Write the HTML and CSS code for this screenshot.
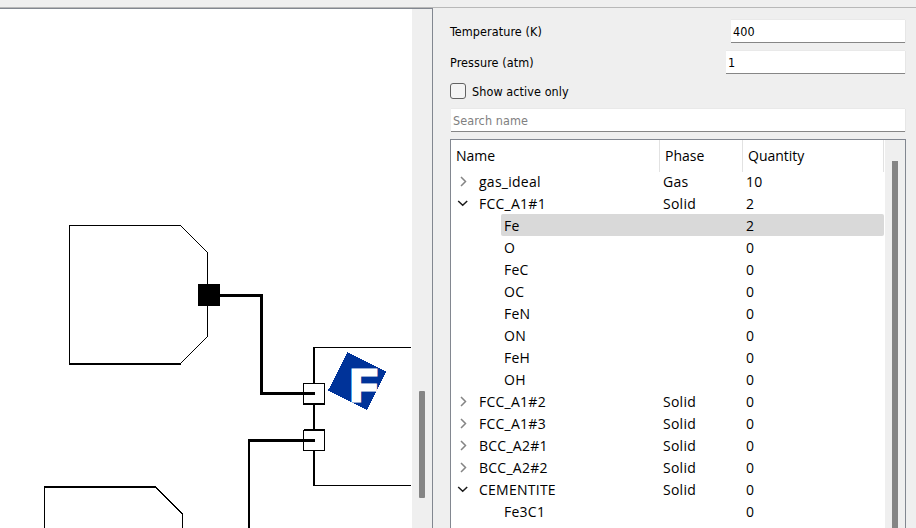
FILE: index.html
```html
<!DOCTYPE html>
<html lang="en">
<head>
<meta charset="utf-8">
<title>Stream editor</title>
<link rel="stylesheet" href="styles.css">
</head>
<body>
<main class="workspace">
  <section class="view">
    <svg class="scene" width="411" height="519" viewBox="0 9 411 519" shape-rendering="crispEdges">
      <g class="line">
        <path d="M69.5 364V225.5H180.5M207.500 252V336"/>
        <path class="slope" d="M180.5 225.500L207.5 252.5M207.500 336.5L180.5 363.5M155.500 487.500L182.500 513.500"/>
        <path class="w2" d="M69 364H181"/>
        <path d="M44.5 528V487M182.5 513V528"/>
        <path class="w2" d="M44 487H156"/>
        <path d="M313 347.5H411M313 485.5H411"/>
        <path class="w2" d="M314 347V486"/>
      </g>
      <rect x="198" y="284" width="22" height="22"/>
      <g class="port">
        <rect x="303.5" y="383.5" width="21" height="20"/>
        <rect x="303.5" y="430.5" width="21" height="20"/>
      </g>
      <path class="line w1" d="M303 404.5H325M304 429.5H325"/>
      <path class="line w3" d="M220 295.5H261.500V393.500H315M249 440.500H315"/>
      <path class="line w2" d="M249 439V528"/>
      <path class="logo" d="M347.500 352L386 371.500L367 410L328 390.500Z"/>
      <text class="mark" x="350" y="400.500">F</text>
    </svg>
    <div class="track"><div class="thumb"></div></div>
  </section>
  <aside class="panel">
    <div class="field temp"><label>Temperature (K)</label><div class="edit">400</div></div>
    <div class="field pres"><label>Pressure (atm)</label><div class="edit">1</div></div>
    <div class="check"><span class="box"></span><span>Show active only</span></div>
    <div class="edit search">Search name</div>
    <div class="tree">
      <div class="content">
        <div class="head"><span class="h1">Name</span><span class="h2">Phase</span><span class="h3">Quantity</span></div>
        <div class="row shut"><i></i><b>gas_ideal</b><b>Gas</b><b>10</b></div>
        <div class="row open"><i></i><b>FCC_A1#1</b><b>Solid</b><b>2</b></div>
        <div class="row child selected"><b>Fe</b><b></b><b>2</b></div>
        <div class="row child"><b>O</b><b></b><b>0</b></div>
        <div class="row child"><b>FeC</b><b></b><b>0</b></div>
        <div class="row child"><b>OC</b><b></b><b>0</b></div>
        <div class="row child"><b>FeN</b><b></b><b>0</b></div>
        <div class="row child"><b>ON</b><b></b><b>0</b></div>
        <div class="row child"><b>FeH</b><b></b><b>0</b></div>
        <div class="row child"><b>OH</b><b></b><b>0</b></div>
        <div class="row shut"><i></i><b>FCC_A1#2</b><b>Solid</b><b>0</b></div>
        <div class="row shut"><i></i><b>FCC_A1#3</b><b>Solid</b><b>0</b></div>
        <div class="row shut"><i></i><b>BCC_A2#1</b><b>Solid</b><b>0</b></div>
        <div class="row shut"><i></i><b>BCC_A2#2</b><b>Solid</b><b>0</b></div>
        <div class="row open"><i></i><b>CEMENTITE</b><b>Solid</b><b>0</b></div>
        <div class="row child"><b>Fe3C1</b><b></b><b>0</b></div>
      </div>
      <div class="tree-track"><div class="tree-thumb"></div></div>
    </div>
  </aside>
</main>
<script src="script.js"></script>
</body>
</html>
```
FILE: script.js
```js
// Adds the chevron that shows whether a tree row is expanded.
document.querySelectorAll('.row > i').forEach(function (el) {
  var open = el.parentNode.classList.contains('open');
  el.innerHTML = '<svg width="12" height="12" viewBox="0 0 12 12"><path d="' +
    (open ? 'M1.200 4L5.700 8.300L10.200 4' : 'M4 2L8.500 6.500L4 11') + '"/></svg>';
});
```
FILE: styles.css
```css
* { box-sizing: border-box; }
body { margin: 0; height: 528px; overflow: hidden; background: #efefef; color: #000; }
.workspace { display: flex; height: 528px; padding-top: 7px; background: linear-gradient(#b8b8b8, #b8b8b8) 0 7px / 100% 1px no-repeat; }
.view { width: 433px; flex: none; margin-top: 1px; border-top: 1px solid #828790; border-right: 1px solid #828790; display: flex; background: #fff; }
.scene { display: block; flex: none; margin-right: 1px; }
.line { fill: none; stroke: #000; stroke-width: 1; }
.slope { stroke-width: 1.4; }
.w2 { stroke-width: 2; }
.w3 { stroke-width: 3; }
.port rect { fill: #fff; stroke: #000; }
.logo { fill: #003399; }
.mark { font: bold 45px "Liberation Sans", sans-serif; fill: #fff; stroke: #fff; stroke-width: 3px; }
.track { width: 20px; background: #efefef; padding: 382px 0 0 7px; }
.thumb { width: 6px; height: 107px; background: #858585; border-radius: 1px; }

.panel { flex: none; width: 473px; margin-top: 13px; padding-left: 17px; display: flex; flex-direction: column; font: 12.5px/24px "DejaVu Sans Condensed", "DejaVu Sans", sans-serif; font-stretch: condensed; letter-spacing: 0.08px; }
.field { display: flex; justify-content: space-between; height: 23px; margin-bottom: 8px; padding-right: 1px; }
.edit { height: 23px; line-height: 24px; padding-left: 2px; background: #fff; border-bottom: 1px solid #868686; box-shadow: 0 -1px #e9e9e9, 1px 0 #e6e6e6; white-space: nowrap; }
.temp .edit { width: 174px; }
.pres .edit { width: 179px; }
.check { display: flex; align-items: center; gap: 6px; height: 18px; margin: 0 0 9px; }
.check span + span { padding-top: 1px; }
.box { width: 16px; height: 16px; border: 1px solid #626262; border-radius: 3px; background: #f4f4f4; }
.search { margin: 0 1px 7px; color: #808080; }

.tree { flex: none; height: 400px; border: 1px solid #828790; background: #fff; display: flex; font: 14px/22px "Open Sans", "Noto Sans", sans-serif; letter-spacing: 0; }
.content { width: 434px; flex: none; }
.head { display: grid; grid-template-columns: 209px 83px 141px; height: 30px; line-height: 32px; }
.head span { padding-left: 5px; border-right: 1px solid #e2e2e2; }
.row { display: grid; grid-template-columns: 28px 184px 83px 1fr; height: 22px; margin-right: 1px; line-height: 23px; letter-spacing: 0.25px; }
.row b { font-weight: 400; white-space: nowrap; }
.row i { padding: 5px 0 0 6px; line-height: 0; }
.row path { fill: none; stroke: #858585; stroke-width: 1.5; }
.open path { stroke: #1a1a1a; }
.child { grid-template-columns: 159px 83px 1fr; margin-left: 50px; padding-left: 3px; border-radius: 2px; }
.selected { background: #d9d9d9; }
.tree-track { width: 20px; background: #efefef; padding: 21px 0 0 7px; }
.tree-thumb { width: 6px; height: 380px; background: #858585; }
```
